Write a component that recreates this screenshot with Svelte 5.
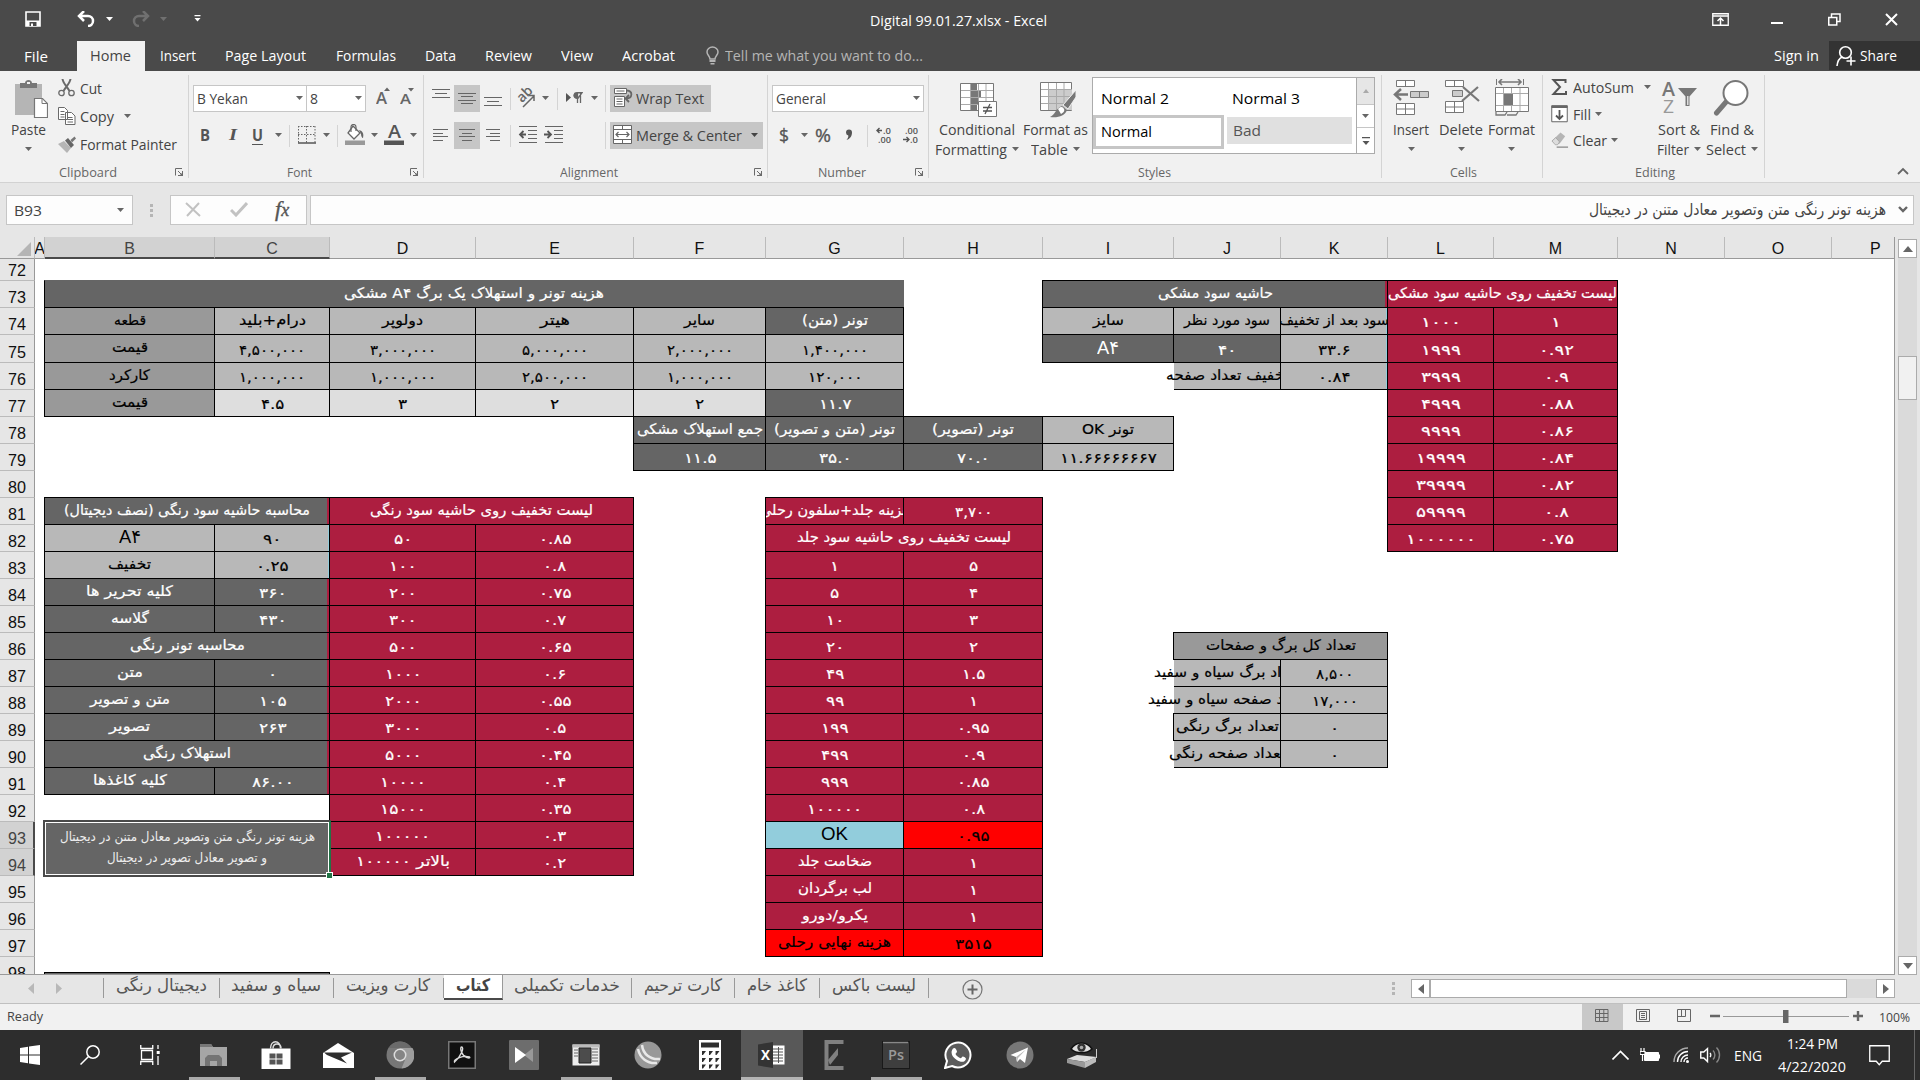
<script>
  // Stretches a run of text horizontally so that it fills the given width.
  function fit(node, w) {
    const apply = (width) => {
      node.style.transform = 'none';
      const own = node.getBoundingClientRect().width;
      if (own && width) node.style.transform = `scaleX(${width / own})`;
    };
    apply(w);
    return { update: apply };
  }

  const tabs = [
    ['Insert', 36], ['Page Layout', 81], ['Formulas', 60], ['Data', 31],
    ['Review', 47], ['View', 32], ['Acrobat', 53]
  ];

  const cols = ['A', 'B', 'C', 'D', 'E', 'F', 'G', 'H', 'I', 'J', 'K', 'L', 'M', 'N', 'O', 'P'];
  const rows = Array.from({ length: 27 }, (_, i) => 72 + i);

  const digitsOnly = /^[۰-۹.,]+$/;
  function numWidth(s, col) {
    const pitch = s.includes(',') ? 8.6 : col === 'L' || col === 'M' ? 10 : 9.2;
    let n = 0;
    for (const ch of s) n += ch === ',' ? 3 : ch === '.' ? 5 : pitch;
    return n;
  }

  // [column, row, text, class, text width, column span, row span]
  const cells = [
    ['B', 73, 'هزینه تونر و استهلاک یک برگ A۴ مشکی', 'dk open', 260, 6],
    ['B', 74, 'قطعه', 'md', 32], ['C', 74, 'درام+بلید', 'lt', 67], ['D', 74, 'دولوپر', 'lt', 41], ['E', 74, 'هیتر', 'lt', 30], ['F', 74, 'سایر', 'lt', 31], ['G', 74, 'تونر (متن)', 'dk', 66],
    ['B', 75, 'قیمت', 'md', 36], ['C', 75, '۴,۵۰۰,۰۰۰', 'lt'], ['D', 75, '۳,۰۰۰,۰۰۰', 'lt'], ['E', 75, '۵,۰۰۰,۰۰۰', 'lt'], ['F', 75, '۲,۰۰۰,۰۰۰', 'lt'], ['G', 75, '۱,۴۰۰,۰۰۰', 'lt'],
    ['B', 76, 'کارکرد', 'md', 41], ['C', 76, '۱,۰۰۰,۰۰۰', 'lt'], ['D', 76, '۱,۰۰۰,۰۰۰', 'lt'], ['E', 76, '۲,۵۰۰,۰۰۰', 'lt'], ['F', 76, '۱,۰۰۰,۰۰۰', 'lt'], ['G', 76, '۱۲۰,۰۰۰', 'lt'],
    ['B', 77, 'قیمت', 'md', 36], ['C', 77, '۴.۵', 'xl'], ['D', 77, '۳', 'xl'], ['E', 77, '۲', 'xl'], ['F', 77, '۲', 'xl'], ['G', 77, '۱۱.۷', 'dk'],
    ['F', 78, 'جمع استهلاک مشکی', 'dk', 126], ['G', 78, 'تونر (متن و تصویر)', 'dk', 121], ['H', 78, 'تونر (تصویر)', 'dk', 82], ['I', 78, 'تونر OK', 'lt', 52],
    ['F', 79, '۱۱.۵', 'dk'], ['G', 79, '۳۵.۰', 'dk'], ['H', 79, '۷۰.۰', 'dk'], ['I', 79, '۱۱.۶۶۶۶۶۶۶۷', 'lt'],

    ['I', 73, 'حاشیه سود مشکی', 'dk edge-red', 115, 3],
    ['I', 74, 'سایز', 'lt', 31], ['J', 74, 'سود مورد نظر', 'lt', 86], ['K', 74, 'سود بعد از تخفیف', 'lt edge-blue', 110],
    ['I', 75, 'A۴', 'dk big', 22], ['J', 75, '۴۰', 'dk'], ['K', 75, '۳۳.۶', 'lt edge-blue'],
    ['J', 76, 'تخفیف تعداد صفحه', 'lt spill', 123], ['K', 76, '۰.۸۴', 'lt edge-blue'],

    ['L', 73, 'لیست تخفیف روی حاشیه سود مشکی', 'rd', 229, 2],
    ...[['۱۰۰۰', '۱'], ['۱۹۹۹', '۰.۹۲'], ['۳۹۹۹', '۰.۹'], ['۴۹۹۹', '۰.۸۸'], ['۹۹۹۹', '۰.۸۶'], ['۱۹۹۹۹', '۰.۸۴'], ['۳۹۹۹۹', '۰.۸۲'], ['۵۹۹۹۹', '۰.۸'], ['۱۰۰۰۰۰۰', '۰.۷۵']]
      .flatMap(([a, b], i) => [['L', 74 + i, a, 'rd'], ['M', 74 + i, b, 'rd']]),

    ['B', 81, 'محاسبه حاشیه سود رنگی (نصف دیجیتال)', 'dk edge-red', 246, 2],
    ['B', 82, 'A۴', 'lt big', 22], ['C', 82, '۹۰', 'lt edge-blue'],
    ['B', 83, 'تخفیف', 'lt', 43], ['C', 83, '۰.۲۵', 'lt edge-blue'],
    ['B', 84, 'کلیه تحریر ها', 'dk', 87], ['C', 84, '۳۶۰', 'dk edge-red'],
    ['B', 85, 'گلاسه', 'dk', 38], ['C', 85, '۴۳۰', 'dk edge-red'],
    ['B', 86, 'محاسبه تونر رنگی', 'dk edge-red', 115, 2],
    ['B', 87, 'متن', 'dk', 26], ['C', 87, '۰', 'dk edge-red'],
    ['B', 88, 'متن و تصویر', 'dk', 80], ['C', 88, '۱۰۵', 'dk edge-red'],
    ['B', 89, 'تصویر', 'dk', 41], ['C', 89, '۲۶۳', 'dk edge-red'],
    ['B', 90, 'استهلاک رنگی', 'dk edge-red', 88, 2],
    ['B', 91, 'کلیه کاغذها', 'dk', 74], ['C', 91, '۸۶.۰۰', 'dk edge-red'],

    ['D', 81, 'لیست تخفیف روی حاشیه سود رنگی', 'rd', 223, 2],
    ...[['۵۰', '۰.۸۵'], ['۱۰۰', '۰.۸'], ['۲۰۰', '۰.۷۵'], ['۳۰۰', '۰.۷'], ['۵۰۰', '۰.۶۵'], ['۱۰۰۰', '۰.۶'], ['۲۰۰۰', '۰.۵۵'], ['۳۰۰۰', '۰.۵'], ['۵۰۰۰', '۰.۴۵'], ['۱۰۰۰۰', '۰.۴'], ['۱۵۰۰۰', '۰.۳۵'], ['۱۰۰۰۰۰', '۰.۳'], ['بالاتر ۱۰۰۰۰۰', '۰.۲']]
      .flatMap(([a, b], i) => [['D', 82 + i, a, 'rd', i === 12 ? 94 : 0], ['E', 82 + i, b, 'rd']]),

    ['G', 81, 'هزینه جلد+سلفون رحلی', 'rd', 150], ['H', 81, '۳,۷۰۰', 'rd'],
    ['G', 82, 'لیست تخفیف روی حاشیه سود جلد', 'rd', 214, 2],
    ...[['۱', '۵'], ['۵', '۴'], ['۱۰', '۳'], ['۲۰', '۲'], ['۴۹', '۱.۵'], ['۹۹', '۱'], ['۱۹۹', '۰.۹۵'], ['۴۹۹', '۰.۹'], ['۹۹۹', '۰.۸۵'], ['۱۰۰۰۰۰', '۰.۸']]
      .flatMap(([a, b], i) => [['G', 83 + i, a, 'rd'], ['H', 83 + i, b, 'rd']]),
    ['G', 93, 'OK', 'blue big', 27], ['H', 93, '۰.۹۵', 'hot'],
    ['G', 94, 'ضخامت جلد', 'rd', 74], ['H', 94, '۱', 'rd'],
    ['G', 95, 'لب برگردان', 'rd', 74], ['H', 95, '۱', 'rd'],
    ['G', 96, 'یکرو/دورو', 'rd', 66], ['H', 96, '۱', 'rd'],
    ['G', 97, 'هزینه نهایی رحلی', 'hot', 113], ['H', 97, '۳۵۱۵', 'hot'],

    ['J', 86, 'تعداد کل برگ و صفحات', 'md', 150, 2],
    ['J', 87, 'تعداد برگ سیاه و سفید', 'lt spill', 147], ['K', 87, '۸,۵۰۰', 'lt'],
    ['J', 88, 'تعداد صفحه سیاه و سفید', 'lt spill', 159], ['K', 88, '۱۷,۰۰۰', 'lt'],
    ['J', 89, 'تعداد برگ رنگی', 'lt', 103], ['K', 89, '۰', 'lt'],
    ['J', 90, 'تعداد صفحه رنگی', 'lt spill', 116], ['K', 90, '۰', 'lt']
  ].map(([col, row, text, cls, w, cs = 1, rs = 1]) => {
    const num = digitsOnly.test(text);
    const c = cols.indexOf(col) + 2;
    return { text, cls: cls + (num ? ' num' : ''), w: w || numWidth(text, col), area: `${row - 70} / ${c} / span ${rs} / span ${cs}` };
  });

  const sheets = [
    ['دیجیتال رنگی', 91, 116], ['سیاه و سفید', 90, 114], ['کارت ویزیت', 84, 110], ['کتاب', 34, 59],
    ['خدمات تکمیلی', 106, 129], ['کارت ترحیم', 78, 103], ['کاغذ خام', 60, 85], ['لیست باکس', 84, 109]
  ];
</script>

{#snippet T(text, w, cls = '')}<span class="t {cls}" style:width="{w}px"><span use:fit={w}>{text}</span></span>{/snippet}
{#snippet caret()}<svg class="caret" width="7" height="4"><path d="M0 0h7L3.5 4z" /></svg>{/snippet}
{#snippet launcher()}<svg class="launch" width="9" height="9"><path d="M.5 7.500V.5H7M3 3l3 3M7.500 3v4.500H3" fill="none" stroke="#6a6a6a" /><path d="M8 4v4H4z" fill="#6a6a6a" /></svg>{/snippet}
{#snippet lines(d)}<svg width="26" height="27"><path {d} stroke="#666" fill="none" /></svg>{/snippet}

<div class="app">
  <header class="title">
    <div class="qat">
      <svg width="16" height="16" viewBox="0 0 16 16"><path d="M1 1h14v14H1z" fill="none" stroke="#fff" stroke-width="1.600" /><path d="M1 9.500h14V15H1z" fill="#fff" /><path d="M4.500 11h7v4h-7z" fill="#4a4a4a" /><path d="M6 12.500h2V15H6z" fill="#fff" /></svg>
      <svg width="19" height="16" viewBox="0 0 19 16"><path d="M2 5h9a5 5 0 0 1 0 10M7 0L2 5l5 5" fill="none" stroke="#fff" stroke-width="2.500" /></svg>
      <svg width="7" height="4"><path d="M0 0h7L3.500 4z" fill="#fff" /></svg>
      <svg width="19" height="16" viewBox="0 0 19 16"><path d="M17 5H8a5 5 0 0 0 0 10M12 0l5 5-5 5" fill="none" stroke="#707070" stroke-width="2.500" /></svg>
      <svg width="7" height="4"><path d="M0 0h7L3.500 4z" fill="#707070" /></svg>
      <svg width="7" height="7"><path d="M.5 0h6v1.200h-6zM.5 3h6l-3 3.500z" fill="#fff" /></svg>
    </div>
    <div class="doc">{@render T('Digital 99.01.27.xlsx - Excel', 177)}</div>
    <div class="win">
      <svg width="17" height="13"><path d="M.75.75h15.500v11.500H.75zM1 3h15" fill="none" stroke="#fff" stroke-width="1.300" /><path d="M8.500 12V5.500M5.500 8l3-3 3 3" fill="none" stroke="#fff" stroke-width="1.500" /></svg>
      <svg width="12" height="13"><path d="M0 9h12v2H0z" fill="#fff" /></svg>
      <svg width="13" height="13"><path d="M.75 4.500h8v7.500h-8zM3.500 4V1h8.500v7.500H9.500" fill="none" stroke="#fff" stroke-width="1.500" /></svg>
      <svg width="13" height="13"><path d="M1 1l11 11M12 1L1 12" stroke="#fff" stroke-width="2" /></svg>
    </div>
  </header>

  <nav class="tabs">
    <div class="file">{@render T('File', 24)}</div>
    <div class="home">{@render T('Home', 41)}</div>
    {#each tabs as [name, w]}<div class="tab">{@render T(name, w)}</div>{/each}
    <div class="tell">
      <svg width="13" height="19" viewBox="0 0 13 19"><path d="M4 13C4 10 1 9.500 1 6a5.500 5 0 0 1 11 0c0 3.500-3 4-3 7z" fill="none" stroke="#b5b5b5" stroke-width="1.500" /><path d="M3.500 14h6v2h-6zM4.500 17h4v1.500h-4z" fill="#b5b5b5" /></svg>
      {@render T('Tell me what you want to do...', 198)}
    </div>
    <div class="signin">{@render T('Sign in', 45)}</div>
    <div class="share">
      <svg width="20" height="22" viewBox="0 0 20 22"><circle cx="9.500" cy="7.500" r="5.800" fill="none" stroke="#fff" stroke-width="1.600" /><path d="M1 21c.5-5 2.500-8 5.500-9M15 11.500v9M10.500 16h9" fill="none" stroke="#fff" stroke-width="1.600" /></svg>
      {@render T('Share', 37)}
    </div>
  </nav>

  <section class="ribbon">
    <div class="group g-clip">
      <div class="body">
        <div class="big paste">
          <svg width="38" height="40" viewBox="0 0 38 40"><path d="M5 5h27v31H5z" fill="#b5b5b5" /><path d="M10 4h5c0-4 7-4 7 0h5v5H10z" fill="#777" /><path d="M17 3h3v2h-3z" fill="#f1f1f1" /><path d="M24.500 19.500h8l5 5v14h-13z" fill="#fff" stroke="#777" stroke-width="1.200" /><path d="M32 19.500v5h5" fill="none" stroke="#777" /></svg>
          {@render T('Paste', 35)}
          <div class="line2">{@render caret()}</div>
        </div>
        <div class="side">
          <div class="cmd">
            <svg width="18" height="18" viewBox="0 0 18 18"><path d="M4.500 0c.5 4 4 7 7 12M12.500 0c-.5 4-4 7-7 12" stroke="#6a6a6a" stroke-width="2" fill="none" /><circle cx="3.500" cy="14" r="2.700" fill="none" stroke="#6a6a6a" stroke-width="1.300" /><circle cx="13.500" cy="14" r="2.700" fill="none" stroke="#6a6a6a" stroke-width="1.300" /></svg>
            {@render T('Cut', 22)}
          </div>
          <div class="cmd">
            <svg width="18" height="18" viewBox="0 0 18 18"><path d="M.5.5h6l3 3v9h-9zM7.500 5.500h6l3.500 3.500v8.500H7.500z" fill="#fff" stroke="#6a6a6a" /><path d="M2.500 4.500h4M2.500 7.500h4M2.500 10h4M9.500 10.500h5M9.500 12.500h5.500M9.500 15h5.500" stroke="#6a6a6a" /></svg>
            {@render T('Copy', 34)}{@render caret()}
          </div>
          <div class="cmd">
            <svg width="18" height="17" viewBox="0 0 18 17"><path d="M0 8l6-3 7 7-4 5z" fill="#b5b5b5" /><path d="M7 4.500l3-2.500 6 7-3 3z" fill="#666" /><path d="M12.500 4l4-3.500 1.500 2-4 4z" fill="#777" /></svg>
            {@render T('Format Painter', 97)}
          </div>
        </div>
      </div>
      <footer>{@render T('Clipboard', 58, 'lab')}{@render launcher()}</footer>
    </div>

    <div class="group g-font">
      <div class="body rows">
        <div class="r font1">
          <div class="combo">{@render T('B Yekan', 51)}{@render caret()}</div>
          <div class="combo size">{@render T('8', 8)}{@render caret()}</div>
          <svg width="15" height="26"><text x="0" y="19" font-size="16" font-family="Open Sans" font-weight="600" fill="#666" textLength="11" lengthAdjust="spacingAndGlyphs">A</text><path d="M8 6l3-3.500L14 6z" fill="#666" /></svg>
          <svg width="15" height="26"><text x="0" y="19" font-size="15" font-family="Open Sans" font-weight="600" fill="#666" textLength="11" lengthAdjust="spacingAndGlyphs">A</text><path d="M8 3l3 3.500L14 3z" fill="#666" /></svg>
        </div>
        <div class="r font2">
          <b>{@render T('B', 10)}</b><b class="it">{@render T('I', 8)}</b><b class="un">{@render T('U', 11)}</b>{@render caret()}<i class="sep"></i>
          <svg width="18" height="18"><path d="M.5 0v17M8.500 0v17M17 0v17M0 .5h17M0 8.500h17" stroke="#666" stroke-dasharray="1.500 1.500" fill="none" /><path d="M0 17h18" stroke="#555" stroke-width="1.500" /></svg>
          {@render caret()}<i class="sep"></i>
          <svg width="20" height="21" viewBox="0 0 20 21"><path d="M8 2l7 7-6 6-6-6z" fill="#fff" stroke="#666" stroke-width="1.300" /><path d="M6 8V3a2.500 2.500 0 0 1 5 0v4" fill="none" stroke="#666" stroke-width="1.200" /><path d="M14 6c4 1 5 4 4 8-1 0-2-2-2-4z" fill="#666" /><path d="M0 16.500h20V21H0z" fill="#999" /></svg>
          {@render caret()}
          <svg width="20" height="21" viewBox="0 0 20 21"><text x="4" y="13.500" font-size="18" font-family="Open Sans" font-weight="600" fill="#555" textLength="13" lengthAdjust="spacingAndGlyphs">A</text><path d="M0 16.500h20V21H0z" fill="#555" /></svg>
          {@render caret()}
        </div>
      </div>
      <footer>{@render T('Font', 25, 'lab')}{@render launcher()}</footer>
    </div>

    <div class="group g-align">
      <div class="body rows">
        <div class="r al1">
          {@render lines('M4 5.500h18M7 9.500h12M4 13.500h18')}
          <div class="on">{@render lines('M4 9.500h18M7 12.500h12M4 16.500h18M7 19.500h12')}</div>
          {@render lines('M4 13.500h18M7 17.500h12M4 21.500h18')}
          <i class="sep"></i>
          <svg width="20" height="20" viewBox="0 0 20 20"><text x="1" y="12" font-size="14" font-family="Open Sans" font-weight="600" fill="#666" transform="rotate(-45 7 9)">ab</text><path d="M6 19L17 8M17 13V7.500h-5" fill="none" stroke="#666" stroke-width="1.500" /></svg>
          {@render caret()}<i class="sep"></i>
          <svg width="17" height="12"><path d="M0 1l5 4.500L0 10z" fill="#555" /><path d="M16 .75H11a2.700 2.700 0 0 0 0 5.500h1zM11.500 1v10M14.500 1v10" stroke="#666" stroke-width="1.300" fill="none" /><path d="M11 1h-1a2.500 2.500 0 0 0 0 5h1z" fill="#666" /></svg>
          {@render caret()}<i class="sep tall"></i>
          <div class="on wide">
            <svg width="20" height="19" viewBox="0 0 20 19"><path d="M.5.5h12v5H.5zM.5 8.500h10v10H.5z" fill="#fff" stroke="#666" /><path d="M2.500 3h8M2.500 11h6M2.500 13.500h6M2.500 16h6" stroke="#666" /><path d="M13 2.500c6 0 6 8-1 8M15 7l-3.500 3.500L15 14" fill="none" stroke="#666" stroke-width="1.800" /></svg>
            {@render T('Wrap Text', 68)}
          </div>
        </div>
        <div class="r al2">
          {@render lines('M5 8.500h15M5 12.500h10M5 15.500h15M5 19.500h10')}
          <div class="on">{@render lines('M5 8.500h16M8 12.500h10M5 15.500h16M8 19.500h10')}</div>
          {@render lines('M6 8.500h14M10 12.500h10M6 15.500h14M10 19.500h10')}
          <i class="sep"></i>
          <svg width="19" height="17"><path d="M1 .5h18M10 4.500h9M10 8.500h9M10 12.500h9M1 16.500h18" stroke="#666" fill="none" /><path d="M8 8.500H2M5.500 5L2 8.500 5.500 12" fill="none" stroke="#555" stroke-width="1.800" /></svg>
          <svg width="19" height="17"><path d="M1 .5h18M10 4.500h9M10 8.500h9M10 12.500h9M1 16.500h18" stroke="#666" fill="none" /><path d="M0 8.500h7M3.500 5L7 8.500 3.500 12" fill="none" stroke="#555" stroke-width="1.800" /></svg>
          <i class="sep tall"></i>
          <div class="on wide merge">
            <svg width="20" height="19"><path d="M.5.5h18v18H.5zM.5 4.500h18M.5 14.500h18M9.500.5v4M9.500 14.500v4" fill="#fff" stroke="#666" /><path d="M3 9.500h13M5.500 7L3 9.500 5.500 12M13.500 7L16 9.500 13.500 12" fill="none" stroke="#666" stroke-width="1.200" /></svg>
            {@render T('Merge & Center', 106)}{@render caret()}
          </div>
        </div>
      </div>
      <footer>{@render T('Alignment', 58, 'lab')}{@render launcher()}</footer>
    </div>

    <div class="group g-num">
      <div class="body rows">
        <div class="r nu1"><div class="combo">{@render T('General', 50)}{@render caret()}</div></div>
        <div class="r nu2">
          <b class="sym">{@render T('$', 10)}</b>{@render caret()}<b class="sym pc">{@render T('%', 16)}</b>
          <svg width="8" height="12"><path d="M1 3.500a3 3 0 0 1 6 0C7 7 5 10 1.500 11c1.500-2 2-3 1.800-4.500A3 3 0 0 1 1 3.500z" fill="#555" /></svg>
          <i class="sep"></i>
          <svg width="17" height="20" font-family="Open Sans" font-size="9.500" font-weight="600" fill="#555"><path d="M6 5.500H1M3.500 3L1 5.500 3.500 8" fill="none" stroke="#555" stroke-width="1.400" /><text x="7" y="9" textLength="8" lengthAdjust="spacingAndGlyphs">.0</text><text x="2" y="18" textLength="13" lengthAdjust="spacingAndGlyphs">.00</text></svg>
          <svg width="17" height="20" font-family="Open Sans" font-size="9.500" font-weight="600" fill="#555"><path d="M0 14.500h6M3.500 12L6 14.500 3.500 17" fill="none" stroke="#555" stroke-width="1.400" /><text x="2" y="9" textLength="13" lengthAdjust="spacingAndGlyphs">.00</text><text x="7" y="18" textLength="8" lengthAdjust="spacingAndGlyphs">.0</text></svg>
        </div>
      </div>
      <footer>{@render T('Number', 48, 'lab')}{@render launcher()}</footer>
    </div>

    <div class="group g-styles">
      <div class="body">
        <div class="big cf">
          <svg width="38" height="40" viewBox="0 0 38 40"><path d="M1.500 4.500h33v27h-33z" fill="#fff" stroke="#777" /><path d="M12 5h6v6h-6zM12 12h10v6H12zM12 19h8v6h-8zM12 26h6v5h-6z" fill="#777" /><path d="M11.500 5v26M19.500 5v26M27 5v26M2 11.500h32M2 18.500h32M2 25.500h32" stroke="#aaa" fill="none" /><path d="M19.500 22.500h18v15h-18z" fill="#fff" stroke="#777" /><path d="M24 28.500h9M24 32h9M31 25l-5 10" stroke="#555" stroke-width="1.300" /></svg>
          {@render T('Conditional', 76)}
          <div class="line2">{@render T('Formatting', 72)}{@render caret()}</div>
        </div>
        <div class="big fa">
          <svg width="38" height="40" viewBox="0 0 38 40"><path d="M1.500 3.500h31v28h-31z" fill="#fff" stroke="#777" /><path d="M10 11h23v20H10z" fill="#ccc" /><path d="M9.500 4v27M17.500 4v27M25 4v27M2 10.500h31M2 17.500h31M2 24.500h31" stroke="#aaa" fill="none" /><path d="M37 11v7l-8 12-5-4z" fill="#777" stroke="#f1f1f1" /><path d="M23 27l5 4c-2 6-9 8-17 7 5-2 6-9 12-11z" fill="#777" /><path d="M19 30c3-3 5-2 6 0s-1 4-3 5z" fill="#fff" /></svg>
          {@render T('Format as', 65)}
          <div class="line2">{@render T('Table', 37)}{@render caret()}</div>
        </div>
        <div class="gallery">
          <div class="samples">
            <div class="sw">{@render T('Normal 2', 68)}</div><div class="sw">{@render T('Normal 3', 68)}</div>
            <div class="sw sel">{@render T('Normal', 51)}</div><div class="sw bad">{@render T('Bad', 28)}</div>
          </div>
          <div class="gscroll">
            <div class="off"><svg width="6" height="4"><path d="M0 4h6L3 0z" fill="#aaa" /></svg></div>
            <div>{@render caret()}</div>
            <div><svg width="8" height="8"><path d="M0 0h8v1.200H0zM.5 4h7L4 8z" fill="#555" /></svg></div>
          </div>
        </div>
      </div>
      <footer>{@render T('Styles', 33, 'lab')}</footer>
    </div>

    <div class="group g-cells">
      <div class="body">
        <div class="big"><svg width="38" height="40" viewBox="0 0 38 40"><path d="M4.500 1.500h18v6h-18zM13.500 1.500v6M4.500 24.500h18v11h-18zM13.500 24.500v11M4.500 30h18" fill="#fff" stroke="#777" /><path d="M18.500 12.500h18v6h-18zM27.500 12.500v6" fill="#ccc" stroke="#777" /><path d="M16 15.500H3M9 10l-6 5.500L9 21" fill="none" stroke="#777" stroke-width="2.500" /></svg>{@render T('Insert', 36)}<div class="line2">{@render caret()}</div></div>
        <div class="big"><svg width="38" height="40" viewBox="0 0 38 40"><path d="M3.500 1.500h18v6h-18zM12.500 1.500v6M3.500 22.500h18v11h-18zM12.500 22.500v11M3.500 28h18" fill="#fff" stroke="#777" /><path d="M10.500 11.500h10v6h-10z" fill="#ccc" stroke="#777" /><path d="M21 8l16 14M36 8L20 22" stroke="#777" stroke-width="2.200" fill="none" /></svg>{@render T('Delete', 44)}<div class="line2">{@render caret()}</div></div>
        <div class="big"><svg width="38" height="40" viewBox="0 0 38 40"><path d="M3.500 0v6M30.500 0v6" stroke="#777" /><path d="M6 3h22M9 0L6 3l3 3M25 0l3 3-3 3" stroke="#777" stroke-width="1.600" fill="none" /><path d="M2.500 8.500h33v24h-33z" fill="#fff" stroke="#777" /><path d="M10.500 9v23M18.500 9v23M27 9v23M3 14.500h32M3 26.500h32" stroke="#aaa" /><path d="M11 15h9v11h-9z" fill="#777" /><path d="M3 33v3h9l2-3M14 36h9l2-3" fill="none" stroke="#777" stroke-width="1.300" /></svg>{@render T('Format', 47)}<div class="line2">{@render caret()}</div></div>
      </div>
      <footer>{@render T('Cells', 27, 'lab')}</footer>
    </div>

    <div class="group g-edit">
      <div class="body">
        <div class="side">
          <div class="cmd"><svg width="18" height="18" viewBox="0 0 18 18"><path d="M14.500 5V2H2.500l6.500 7-6.500 7h12.500v-3" fill="none" stroke="#555" stroke-width="2" /></svg>{@render T('AutoSum', 61)}<span class="gap">{@render caret()}</span></div>
          <div class="cmd"><svg width="18" height="18" viewBox="0 0 18 18"><path d="M.75.75h15.500v16H.75z" fill="#fff" stroke="#666" /><path d="M.5.500h16v2.500H.5z" fill="#666" /><path d="M8.500 5v9M5 10.500L8.500 14l3.500-3.500" fill="none" stroke="#555" stroke-width="1.800" /></svg>{@render T('Fill', 18)}{@render caret()}</div>
          <div class="cmd"><svg width="18" height="18" viewBox="0 0 19 18"><path d="M10 1l5 4-6 8H4L1 10z" fill="#b5b5b5" /><path d="M1 10l4-3.500 4 4.500-2 3H4.500z" fill="#ddd" stroke="#999" stroke-width=".7" /><path d="M6 16.500h12" stroke="#666" /></svg>{@render T('Clear', 34)}{@render caret()}</div>
        </div>
        <div class="big sort"><svg width="38" height="40" viewBox="0 0 38 40"><text x="2" y="17" font-family="Open Sans" font-weight="600" font-size="19" fill="#777" textLength="13" lengthAdjust="spacingAndGlyphs">A</text><text x="3" y="34" font-family="Open Sans" font-size="19" fill="#999" textLength="11" lengthAdjust="spacingAndGlyphs">Z</text><path d="M18 9h19l-7.500 8.500V27h-4v-9.500z" fill="#777" /><path d="M27 17h1.500v9H27z" fill="#ddd" /></svg>{@render T('Sort &', 42)}<div class="line2">{@render T('Filter', 32)}{@render caret()}</div></div>
        <div class="big find"><svg width="38" height="40" viewBox="0 0 38 40"><path d="M13 23L3.500 34" stroke="#777" stroke-width="5" stroke-linecap="round" /><circle cx="22.500" cy="14" r="12" fill="#fff" stroke="#777" stroke-width="2" /></svg>{@render T('Find &', 44)}<div class="line2">{@render T('Select', 40)}{@render caret()}</div></div>
      </div>
      <footer>{@render T('Editing', 40, 'lab')}</footer>
    </div>
    <div class="collapse"><svg width="12" height="8"><path d="M1 7l5-5 5 5" fill="none" stroke="#666" stroke-width="1.800" /></svg></div>
  </section>

  <section class="fbar">
    <div class="box name">{@render T('B93', 28)}{@render caret()}</div>
    <div class="dots"><i></i><i></i><i></i></div>
    <div class="box ops">
      <svg width="16" height="15"><path d="M1 1l14 13M14 1L2 14" stroke="#c2c2c2" stroke-width="2" /></svg>
      <svg width="18" height="15"><path d="M1 8l5 5L17 1" fill="none" stroke="#c2c2c2" stroke-width="3" /></svg>
      <em>f<small>x</small></em>
    </div>
    <div class="box input"><span dir="rtl">{@render T('هزینه تونر رنگی متن وتصویر معادل متنن در دیجیتال', 297, 'fa')}</span><svg width="10" height="7"><path d="M1 1l4 4 4-4" fill="none" stroke="#666" stroke-width="2.400" /></svg></div>
  </section>

  <section class="work">
    <div class="sheet">
      <div class="corner"><svg width="14" height="14"><path d="M14 0v14H0z" fill="#b5b5b5" /></svg></div>
      {#each cols as c}<div class="ch" class:on={c === 'B' || c === 'C'} class:last={c === 'P'}>{c}</div>{/each}
      {#each rows as r, i}<div class="rh" class:on={r === 93 || r === 94} class:cut={r === 98} style:grid-row={i + 2}>{@render T(r, 18)}</div>{/each}
      {#each cells as c}
        <div class="cell {c.cls}" style:grid-area={c.area} dir="rtl">{@render T(c.text, c.w)}</div>
      {/each}
      <div class="cell dk note">
        {@render T('هزینه تونر رنگی متن وتصویر معادل متنن در دیجیتال', 255)}
        {@render T('و تصویر معادل تصویر در دیجیتال', 160)}
      </div>
      <div class="selection"><i></i></div>
      <div class="cell dk tail"></div>
    </div>
    <div class="vscroll">
      <div class="sb"><svg width="10" height="6"><path d="M0 6h10L5 0z" fill="#666" /></svg></div>
      <div class="track"><div class="thumb"></div></div>
      <div class="sb"><svg width="10" height="6"><path d="M0 0h10L5 6z" fill="#666" /></svg></div>
    </div>
  </section>

  <section class="sheets">
    <div class="nav"><svg width="6" height="11"><path d="M6 0v11L0 5.500z" fill="#b8b8b8" /></svg><svg width="6" height="11"><path d="M0 0v11l6-5.500z" fill="#b8b8b8" /></svg></div>
    {#each sheets as [name, w, total], i}
      <div class="st" class:active={i === 3} style:width="{total}px" dir="rtl">{@render T(name, w, 'fa')}</div>
    {/each}
    <svg class="add" width="21" height="21"><circle cx="10.500" cy="10.500" r="9.500" fill="none" stroke="#777" stroke-width="1.200" /><path d="M10.500 5.500v10M5.500 10.500h10" stroke="#666" stroke-width="2" /></svg>
    <div class="dots hd"><i></i><i></i><i></i></div>
    <div class="hscroll">
      <div class="sb"><svg width="6" height="10"><path d="M6 0v10L0 5z" fill="#666" /></svg></div>
      <div class="hthumb"></div><div class="htrack"></div>
      <div class="sb"><svg width="6" height="10"><path d="M0 0v10l6-5z" fill="#666" /></svg></div>
    </div>
  </section>

  <section class="status">
    <div class="ready">{@render T('Ready', 36)}</div>
    <div class="view on"><svg width="14" height="13"><path d="M.5.5h12.500v12H.5zM.5 4.500H13M.5 8.500H13M4.500.5v12M8.800.5v12" fill="none" stroke="#666" /></svg></div>
    <div class="view"><svg width="14" height="13"><path d="M.5.5h13v12H.5zM3.500 2.500h7v8h-7zM5 4.500h4M5 6.500h4M5 8.500h4" fill="none" stroke="#666" /></svg></div>
    <div class="view"><svg width="14" height="13"><path d="M.5.5h13v12H.5zM.5 7.500h8v-7M4.500.5v7" fill="none" stroke="#666" /></svg></div>
    <svg class="zoom" width="154" height="14"><path d="M0 6h10M148 1v10M143 6h10" stroke="#666" stroke-width="2.400" /><path d="M13 6.500h126" stroke="#999" /><path d="M73 0h5.500v13H73z" fill="#666" /></svg>
    <div class="pct">{@render T('100%', 31, 'lab')}</div>
  </section>

  <footer class="task">
    <div class="ti s"><svg width="20" height="20"><path d="M0 3l8-1.200V9.500H0zM9 1.600L20 0v9.500H9zM0 10.500h8v7.700L0 17zM9 10.500h11V20L9 18.400z" fill="#fff" /></svg></div>
    <div class="ti s"><svg width="20" height="20"><circle cx="13" cy="7" r="6.200" fill="none" stroke="#fff" stroke-width="1.500" /><path d="M8.500 11.500L.5 19.500" stroke="#fff" stroke-width="1.500" /></svg></div>
    <div class="ti m"><svg width="21" height="20"><path d="M.75 0v3.500h12V0M1.500 5.500h11v9h-11zM.75 20v-3.500h12V20M18 0v4M18 11v9" fill="none" stroke="#fff" stroke-width="1.300" /><path d="M16.700 6h3v3h-3z" fill="#fff" /></svg></div>
    <div class="ti run"><svg width="28" height="24"><path d="M0 1h11l2 3h14v19H0z" fill="#a6a6a6" /><path d="M0 1h11l2 3H0z" fill="#777" /><path d="M5 23v-8l3-3h11l3 3v8h-5v-5h-7v5z" fill="#747474" /></svg></div>
    <div class="ti"><svg width="30" height="29"><path d="M.5 7.500h29V28H.5z" fill="#fff" /><path d="M9.500 7.500c0-9 10-9 10 0M12 7.500c0-6 8-6 8 0" fill="none" stroke="#ddd" stroke-width="1.500" /><path d="M8.500 12.500h6v5h-6zM15.500 12.500h6v5h-6zM8.500 18.500h6v5h-6zM15.500 18.500h6v5h-6z" fill="#555" /></svg></div>
    <div class="ti"><svg width="31" height="25"><path d="M0 10L15 0l16 10v15H0z" fill="#fff" /><path d="M1 9.500h28l-11 5 6 6L4 12z" fill="#2e2e2e" /></svg></div>
    <div class="ti run"><svg width="28" height="28"><circle cx="14" cy="14" r="13.500" fill="#777" /><path d="M14 7h12.500a13.500 13.500 0 0 1-11 20.500L19 19z" fill="#9d9d9d" /><path d="M2.500 7a13.500 13.500 0 0 1 23 0H14z" fill="#6a6a6a" /><circle cx="14" cy="14" r="6.500" fill="#ddd" /><circle cx="14" cy="14" r="5" fill="#858585" /></svg></div>
    <div class="ti"><svg width="28" height="28"><path d="M.75.750h26.500v26.500H.75z" fill="#111" stroke="#777" stroke-width="1.500" /><path d="M13.500 6c3 0 0 9-7 15-1-3 9-7 15-5 2 2-6 1-8-5-1-2-1-5 0-5z" fill="none" stroke="#ddd" stroke-width="1.400" /></svg></div>
    <div class="ti"><svg width="30" height="30"><rect width="30" height="30" rx="1" fill="#6d6d6d" /><path d="M24 8v14l-9-7z" fill="#999" /><path d="M6 7l11 8-11 8z" fill="#fff" /></svg></div>
    <div class="ti run"><svg width="28" height="22"><path d="M.5.5h27v21H.5z" fill="#ededed" /><path d="M.5.5h27v3H.5z" fill="#bbb" /><path d="M7 4h12v15H7z" fill="#4c4c4c" stroke="#222" /><path d="M2 6h4M2 9h4M2 12h4M20 5h6M20 8h6M20 11h6M20 14h6M20 17h6" stroke="#666" /></svg></div>
    <div class="ti"><svg width="28" height="28"><circle cx="14" cy="14" r="13.500" fill="#989898" /><path d="M4 8c2 9 9 15 19 14M8 4c1 9 8 15 18 14" fill="none" stroke="#e8e8e8" stroke-width="2.500" /></svg></div>
    <div class="ti"><svg width="22" height="30"><path d="M0 0h22v30H0z" fill="#fff" /><path d="M2 2.500h18v5H2z" fill="#2e2e2e" /><path d="M3 11h4l-3 4H3zM10 11h4l-3 4h-1zM16.500 11h4l-3 4h-1zM3 18h4l-3 4H3zM10 18h4l-3 4h-1zM16.500 18h4l-3 4h-1zM3 24.500h4l-3 4H3zM10 24.500h4l-3 4h-1zM16.500 24.500h4l-3 4h-1z" fill="#2e2e2e" /></svg></div>
    <div class="ti cur"><svg width="28" height="28"><path d="M14 4.500h12.500v19H14z" fill="#fff" /><path d="M15 8h10M15 11h10M15 14h10M15 17h10M15 20h10M20.500 6v16" stroke="#555" /><path d="M0 3.500L15 1v26L0 24.500z" fill="#333" /><text x="3" y="19" font-family="Open Sans" font-weight="700" font-size="15" fill="#fff" textLength="9" lengthAdjust="spacingAndGlyphs">X</text></svg></div>
    <div class="ti"><svg width="20" height="30"><path d="M19.500 2H2.500v26h17" fill="none" stroke="#808080" stroke-width="4" /><path d="M4 20l10-12v7L6 25z" fill="#808080" /></svg></div>
    <div class="ti run"><svg width="28" height="28"><rect x=".5" y=".5" width="27" height="27" fill="#3e3e3e" stroke="#191919" /><path d="M1 1.500h25" stroke="#888" stroke-width="1.500" /><text x="6" y="19" font-family="Open Sans" font-weight="600" font-size="15" fill="#999" textLength="16" lengthAdjust="spacingAndGlyphs">Ps</text></svg></div>
    <div class="ti"><svg width="28" height="28"><path d="M1 27l2-7a12.500 12.500 0 1 1 5 5z" fill="#5c5c5c" stroke="#fff" stroke-width="2" /><path d="M9 7.500c2-1.500 3 0 4 3 0 1-1.500 2-1.500 2.500 1 2 3 3.500 5 4.200 1 0 1.500-2 2.500-1.800 3 1.200 3.500 2 2.500 3.500-1.500 2.500-5 2.500-9-.2C8 16 6 11 9 7.500z" fill="#fff" /></svg></div>
    <div class="ti"><svg width="28" height="28"><circle cx="14" cy="14" r="13.500" fill="#777" /><path d="M4.500 14L22 6.500 19 22l-5-4-3 3-1-5z" fill="#fff" /><path d="M10 16L20 8.500 12 17l-1 4z" fill="#bbb" /></svg></div>
    <div class="ti"><svg width="30" height="28"><path d="M4 8C9 0 20 0 25 8c-5 5-16 5-21 0z" fill="#ddd" stroke="#111" stroke-width="1.500" /><circle cx="14.500" cy="6.500" r="4.200" fill="#333" /><circle cx="14.500" cy="6.500" r="1.800" fill="#aaa" /><path d="M0 18l10-4 20 2-12 5z" fill="#ddd" /><path d="M0 18l18 3v6L0 22z" fill="#999" /><path d="M18 21l11-5v5l-11 6z" fill="#bbb" /><path d="M29.500 8v9" stroke="#ccc" /></svg></div>
    <div class="tray">
      <svg width="17" height="10"><path d="M.5 9.500l8-8 8 8" fill="none" stroke="#fff" stroke-width="1.600" /></svg>
      <svg width="20" height="15"><path d="M4.500 4.500h14v8h-14z" fill="#fff" stroke="#fff" /><path d="M19 6.500h1v4h-1z" fill="#fff" /><path d="M1 0v3M4 0v3M0 3.500h5v3H0zM2.500 6v7" stroke="#fff" stroke-width="1.200" fill="#2a2a2a" /></svg>
      <svg width="17" height="16"><path d="M1 15A14 14 0 0 1 15 1" fill="none" stroke="#aaa" stroke-width="1.400" /><path d="M4.500 15A10.500 10.500 0 0 1 15 4.500M8 15a7 7 0 0 1 7-7M11 15a4 4 0 0 1 4-4" fill="none" stroke="#fff" stroke-width="1.400" /><circle cx="14.500" cy="14.500" r="1.500" fill="#fff" /></svg>
      <svg width="21" height="18"><path d="M.75 6h3L7.500 2.500v13L3.800 12H.75z" fill="none" stroke="#fff" stroke-width="1.400" /><path d="M10 7c1 1 1 3 0 4" stroke="#fff" fill="none" stroke-width="1.400" /><path d="M13 4.500c2.500 2.500 2.500 6.500 0 9M16.500 1.500c4 4 4 11 0 15" stroke="#888" fill="none" stroke-width="1.400" /></svg>
      {@render T('ENG', 28)}
      <div class="clock">{@render T('1:24 PM', 51)}{@render T('4/22/2020', 68)}</div>
      <svg class="note-ic" width="21" height="21"><path d="M.75.75h19.500v15.500h-7l-3 3.500-3-3.500H.75z" fill="none" stroke="#fff" stroke-width="1.300" /></svg>
      <i class="peek"></i>
    </div>
  </footer>
</div>

<style>
  :global(body) { margin: 0; background: #e6e6e6; }
  .app { width: 1920px; height: 1080px; overflow: hidden; display: flex; flex-direction: column; font: 15px/20px "Open Sans", sans-serif; color: #444; background: #e6e6e6; }
  .app :global(*) { box-sizing: border-box; }
  svg { display: block; flex: none; }
  .t { display: inline-block; white-space: nowrap; flex: none; direction: ltr; text-align: left; }
  .t > span { display: inline-block; transform-origin: 0 50%; unicode-bidi: plaintext; }
  .lab { font-size: 13px; }
  .fa { font-family: "DejaVu Sans", sans-serif; }
  .caret { fill: #666; }

  .title { height: 41px; background: #4a4a4a; color: #fff; display: grid; grid-template-columns: 870px 842px 208px; }
  .qat { display: grid; grid-template-columns: 52px 29px 25px 29px 34px 10px; padding: 0 0 4px 25px; align-items: center; }
  .doc { padding-top: 10px; }
  .win { display: grid; grid-template-columns: 59px 57px 57px 20px; align-items: center; padding-bottom: 3px; }

  .tabs { height: 30px; background: #4a4a4a; color: #fff; display: flex; align-items: center; }
  .tabs .t { transform: translateY(-1px); }
  .file { width: 77px; padding: 1px 0 0 24px; }
  .home { width: 68px; height: 30px; background: #f1f1f1; color: #444; padding: 5px 0 0 13px; margin-right: 1px; }
  .tab { padding: 0 15px 1px 14.200px; }
  .tell { margin-left: 16px; display: flex; gap: 6px; color: #b5b5b5; align-items: center; }
  .tell svg { transform: translateY(-1px); }
  .signin { margin-left: auto; margin-right: 10px; }
  .share { width: 91px; height: 29px; background: #333; display: flex; align-items: center; gap: 4px; padding-left: 7px; margin-bottom: 1px; }

  .ribbon { height: 112px; background: #f1f1f1; border-bottom: 1px solid #d2d2d2; display: flex; }
  .group { height: 111px; display: grid; grid-template-rows: 91px 20px; background: linear-gradient(#d4d4d4, #d4d4d4) right 4px / 1px 103px no-repeat; }
  .group footer { display: grid; grid-template-columns: 1fr auto; justify-items: center; align-items: center; color: #666; padding: 0 5px 2px 0; }
  .g-clip { width: 189px; }
  .g-font { width: 235px; }
  .g-align { width: 344px; }
  .g-num { width: 161px; }
  .g-styles { width: 453px; }
  .g-cells { width: 161px; }
  .g-edit { width: 222px; }
  .g-clip footer { padding-left: 1px; }
  .g-font footer, .g-num footer { padding-left: 0; }
  .g-styles footer { padding-right: 2px; }
  .g-edit footer { padding: 0 0 2px 2px; }
  .g-cells footer { padding: 0 0 2px 2px; }
  .body { display: flex; }
  .rows { flex-direction: column; padding-top: 14px; gap: 10px; }
  .r { display: grid; height: 27px; align-items: center; justify-items: start; }
  .r svg, .r .t, .cmd, .sel .t { transform: translateY(-1px); }
  .big { display: flex; flex-direction: column; align-items: center; padding-top: 8px; height: 91px; }
  .line2 { height: 20px; display: flex; align-items: center; gap: 5px; }
  .paste { width: 57px; }
  .side { display: flex; flex-direction: column; padding-top: 4px; }
  .g-clip .side { padding: 4px 0 0 1px; }
  .cmd { display: flex; align-items: center; height: 27px; gap: 4px; }
  .g-clip .cmd { height: 28px; margin-bottom: 0; }
  .g-clip .cmd .caret { margin-left: 6px; }
  .combo { height: 27px; width: 114px; background: #fff; border: 1px solid #c6c6c6; display: flex; align-items: center; justify-content: space-between; padding: 0 3px; }
  .combo.size { width: 60px; }
  .font1 { grid-template-columns: 113px 70px 24px 24px; padding-left: 4px; }
  .font2 { grid-template-columns: 29px 23px 23px 14px 9px 25px 14px 8px 26px 13px 26px 8px; padding-left: 11px; }
  .it { font-family: "Liberation Serif", serif; font-style: italic; font-size: 18px; }
  .un .t > span { border-bottom: 1px solid #555; line-height: 17px; }
  .font2 b { color: #555; font-size: 16px; }
  .sep { width: 1px; height: 22px; background: #d4d4d4; }
  .sep.tall { height: 27px; }
  .al1 { grid-template-columns: 26px 26px 30px 7px 25px 15px 9px 25px 14px 5px 101px; padding-left: 4px; }
  .al2 { grid-template-columns: 26px 26px 30px 8px 26px 61px 5px 153px; padding-left: 4px; }
  .on { background: #c6c6c6; }
  .wide { width: 101px; height: 27px; display: flex; align-items: center; padding-left: 4px; gap: 2px; }
  .wide.merge { width: 153px; padding-left: 3px; gap: 3px; }
  .wide.merge .caret { margin-left: 6px; fill: #444; }
  .nu1 { padding-left: 4px; }
  .nu1 .combo { width: 152px; }
  .nu2 { grid-template-columns: 22px 14px 30px 22px 9px 27px 20px; padding-left: 11px; }
  .sym { font-size: 19px; font-weight: 400; color: #555; -webkit-text-stroke: .3px #555; }
  .pc { font-size: 18px; }
  .cf { width: 94px; }
  .cf > svg { transform: translateX(1px); }
  .fa.big { width: 67px; font-family: inherit; margin-left: -1px; }
  .fa.big > svg { transform: translateX(2px); }
  .g-styles .cf { padding-left: 1px; }
  .gallery { width: 283px; height: 77px; margin: 6px 0 0 3px; border: 1px solid #ababab; background: #fff; display: flex; justify-content: space-between; color: #000; }
  .samples { display: grid; grid-template-columns: 131px 129px; grid-template-rows: 37px 34px; }
  .sw { padding: 10px 0 0 8px; }
  .sw.sel { border: 3px solid #c6c6c6; padding: 4px 0 0 5px; }
  .sw.bad { background: #e0e0e0; margin: 2px 0 5px 3px; padding: 3px 0 0 6px; color: #555; width: 125px; }
  .gscroll { width: 18px; display: grid; grid-template-rows: 26px 23px 26px; border-left: 1px solid #ababab; }
  .gscroll div { display: flex; align-items: center; justify-content: center; }
  .gscroll div + div { border-top: 1px solid #c6c6c6; }
  .off { background: #e6e6e6; }
  .g-cells .body { padding-left: 4px; }
  .g-cells .big { width: 50.300px; }
  .g-edit .side { width: 109px; padding-left: 8px; }
  .gap { margin-left: 6px; }
  .g-edit .cmd { height: 26.500px; }
  .sort { width: 53px; }
  .find { width: 53px; }
  .collapse { margin-left: auto; padding: 96px 11px 0 0; }

  .fbar { height: 54px; display: flex; padding: 12px 6px 0; }
  .box { height: 30px; background: #fdfdfd; border: 1px solid #c6c6c6; display: flex; align-items: center; }
  .name { width: 127px; justify-content: space-between; padding: 0 8px 1px 7px; }
  .dots { width: 37px; height: 30px; display: flex; flex-direction: column; align-items: center; justify-content: center; gap: 2px; }
  .dots i { width: 3px; height: 3px; background: #b5b5b5; }
  .ops { width: 137px; display: grid; grid-template-columns: 45px 45px 30px; padding: 0 0 1px 14px; }
  .ops em { font: italic 22px/24px "Liberation Serif", serif; color: #555; -webkit-text-stroke: .4px; }
  .ops small { font-size: 18px; }
  .input { flex: 1; margin-left: 3px; justify-content: flex-end; gap: 12px; padding: 0 5px 2px 0; font-size: 16px; }

  .work { height: 738px; display: flex; }
  .sheet { width: 1895px; height: 738px; overflow: hidden; display: grid; position: relative; background: #fff; border-right: 1px solid #999; border-bottom: 1px solid #999;
    grid-template-columns: 35px 10px 170px 115px 146px 158px 132px 138px 139px 131px 107px 107px 106px 124px 107px 107px 63px;
    grid-template-rows: 22px 22px 27px 27px 28px repeat(22, 27px) 18px; }
  .corner, .ch { background: #e6e6e6; border-bottom: 1px solid #999; border-right: 1px solid #bbb; }
  .corner { padding: 5px 0 0 17px; }
  .ch { font: 16px/22px "Liberation Sans", sans-serif; color: #111; text-align: center; display: flex; justify-content: center; padding-top: 1px; overflow: hidden; }
  .ch.on { background: #d2d2d2; border-bottom: 2px solid #4a4a4a; color: #444; }
  .ch.last { justify-content: flex-start; padding-left: 38px; border-right: 0; }
  .rh { grid-column: 1; background: #e6e6e6; border-right: 1px solid #999; border-bottom: 1px solid #bbb; font: 17px/18px "Liberation Sans", sans-serif; color: #111; display: flex; align-items: flex-end; padding: 0 0 0 8px; overflow: hidden; }
  .rh.cut { align-items: flex-start; padding-top: 8px; border-bottom: 0; }
  .rh.on { background: #d2d2d2; border-right: 2px solid #4a4a4a; color: #444; }
  .cell { margin: -1px 0 0 -1px; border: 1px solid #000; display: flex; align-items: center; justify-content: center; overflow: hidden; font: 14.500px/20px "DejaVu Sans", sans-serif; color: #000; padding-bottom: 3px; min-width: 0; -webkit-text-stroke: .2px; }
  .num { font-size: 14px; padding: 2px 0 0 1px; }
  .big.cell { display: flex; flex-direction: row; height: auto; font-family: "Liberation Sans", "DejaVu Sans", sans-serif; font-size: 18px; padding: 0 0 2px; align-items: center; -webkit-text-stroke: 0; }
  .dk { background: #656565; color: #fff; }
  .md { background: #999; }
  .lt { background: #b8b8b8; }
  .xl { background: #dedede; }
  .rd { background: #ad1e40; color: #fff; }
  .hot { background: #f00; }
  .blue { background: #92cddc; }
  .open { border-color: #656565 #656565 #000 #000; }
  .edge-red { box-shadow: inset -2px 0 #ad1e40; }
  .edge-blue { box-shadow: inset -1px 0 #92cddc; }
  .spill { overflow: visible; border-left: 0; margin-left: 0; clip-path: inset(0 0 0 -60px); }
  .note { grid-area: 23 / 3 / span 2 / span 2; flex-direction: column; font-size: 13px; gap: 1px; padding: 0 0 3px 0; -webkit-text-stroke: 0; color: #eee; }
  .selection { grid-area: 23 / 3 / span 2 / span 2; margin: -2px -1px -1px -2px; border: 2px solid #4a4a4a; border-right-color: #217346; box-shadow: inset 0 0 0 1px #fff; position: relative; }
  .selection i { position: absolute; right: -4px; bottom: -4px; width: 7px; height: 7px; background: #217346; border: 1px solid #fff; }
  .tail { grid-area: 28 / 3 / span 1 / span 2; margin-top: 15px; }

  .vscroll { width: 20px; margin-left: 3px; padding-top: 2px; display: flex; flex-direction: column; }
  .sb { width: 19px; height: 19px; background: #fff; border: 1px solid #ababab; display: flex; align-items: center; justify-content: center; flex: none; }
  .track { flex: 1; width: 19px; background: #dadada; padding-top: 98px; }
  .thumb { height: 44px; background: #f1f1f1; border: 1px solid #ababab; }

  .sheets { height: 29px; display: flex; align-items: flex-start; border-bottom: 1px solid #c0c0c0; color: #555; }
  .nav { width: 104px; height: 20px; margin-top: 3px; border-right: 1px solid #999; display: flex; gap: 22px; padding: 5px 0 0 28px; }
  .st { height: 20px; margin-top: 3px; border-right: 1px solid #999; display: flex; align-items: center; justify-content: center; font-size: 17px; padding-bottom: 7px; flex: none; }
  .st.active { height: 26px; margin-top: -1px; background: #fff; border-bottom: 2px solid #4a4a4a; padding: 0 0 3px; font-weight: 700; color: #444; }
  .add { margin: 4px 0 0 33px; }
  .dots.hd { width: 37px; height: 26px; margin-left: 392px; }
  .hscroll { display: flex; margin-top: 4px; margin-left: auto; margin-right: 25px; width: 486px; }
  .hthumb { width: 417px; height: 19px; background: #fff; border: 1px solid #ababab; margin-left: 0; }
  .htrack { flex: 1; height: 19px; background: #dadada; }

  .status { height: 26px; background: #f1f1f1; display: flex; align-items: center; }
  .ready { width: 1582px; padding: 0 0 2px 7px; font-size: 13px; }
  .view { width: 41px; height: 26px; display: flex; align-items: center; justify-content: center; padding: 0 2px 3px 0; }
  .view.on { background: #c8c8c8; }
  .zoom { margin: 0 15px 1px 5px; }
  .pct { padding-bottom: 2px; }

  .task { height: 50px; background: #2d2d2d; display: flex; color: #fff; }
  .ti { width: 62px; display: flex; align-items: center; justify-content: center; }
  .ti.s { width: 60px; }
  .ti.m { width: 63px; padding-right: 3px; }
  .run { background: linear-gradient(#aaa, #aaa) center bottom / 51px 3px no-repeat; }
  .cur { background: linear-gradient(#b5b5b5, #b5b5b5) center bottom / 62px 3px no-repeat #585858; }
  .tray { margin-left: auto; width: 308px; display: grid; grid-template-columns: 28px 33px 27px 34px 44px 91px 45px 6px; align-items: center; justify-items: start; }
  .clock { width: 68px; display: flex; flex-direction: column; align-items: center; gap: 3px; padding-bottom: 1px; }
  .peek { width: 1px; height: 50px; background: #666; }
</style>
